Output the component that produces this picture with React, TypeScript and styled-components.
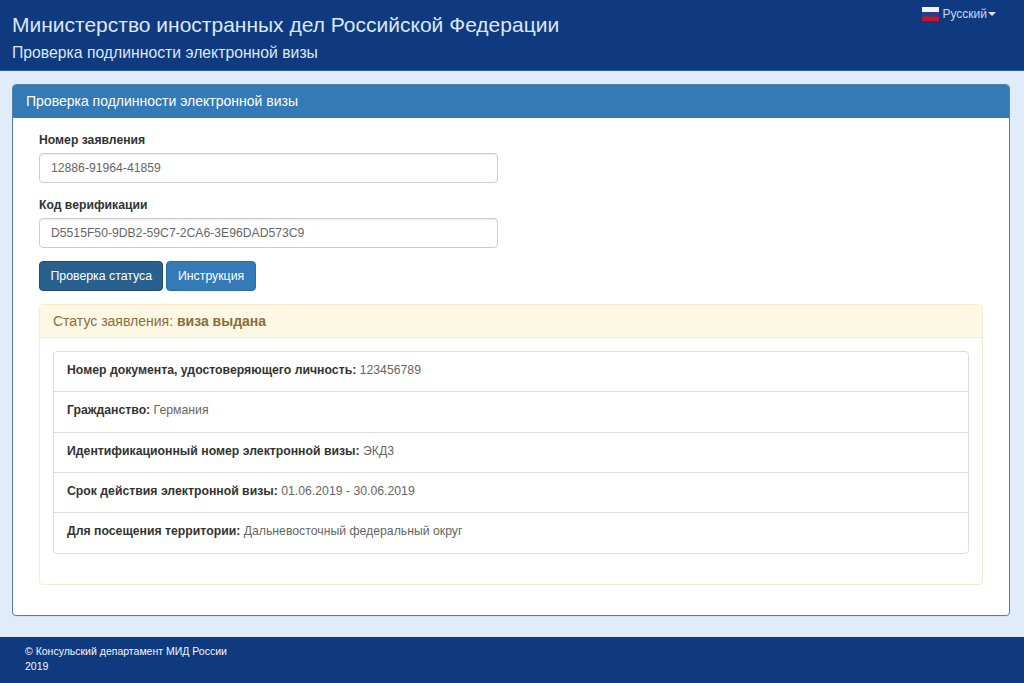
import React from "react";
import styled, { createGlobalStyle } from "styled-components";

const Global = createGlobalStyle`
  html, body { margin: 0; padding: 0; }
  body {
    background: #e0ecfa;
    font-family: "Liberation Sans", Arial, sans-serif;
    font-size: 12px;
    color: #333;
  }
  * { box-sizing: border-box; }
`;

const Page = styled.div`
  height: 683px;
  display: flex;
  flex-direction: column;
  overflow: hidden;
`;

const Header = styled.header`
  height: 71px;
  flex: none;
  background: #103a80;
  border-bottom: 1px solid #2c5a94;
  padding: 11px 12px 0;
  position: relative;
  color: #dbe7f7;
`;

const Title = styled.h1`
  margin: 0;
  font-size: 21px;
  line-height: 27px;
  font-weight: 400;
`;

const Subtitle = styled.h2`
  margin: 5px 0 0;
  font-size: 15.75px;
  line-height: 20px;
  font-weight: 400;
`;

const Lang = styled.div`
  position: absolute;
  top: 7px;
  right: 28px;
  display: flex;
  align-items: center;
  gap: 3px;
  font-size: 12px;
  line-height: 14px;
  color: #c6d8f2;
`;

const Caret = styled.span`
  width: 0;
  height: 0;
  border-left: 4px solid transparent;
  border-right: 4px solid transparent;
  border-top: 4px solid #d6e3f6;
  margin-left: -2px;
`;

const Main = styled.main`
  flex: 1;
  min-height: 0;
  padding: 13px 14px 21px 12px;
  display: flex;
`;

const Panel = styled.section`
  flex: 1;
  background: #fff;
  border: 1px solid #4f83ad;
  border-radius: 4px;
  box-shadow: 0 1px 1px rgba(0, 0, 0, 0.05);
  display: flex;
  flex-direction: column;
`;

const PanelHeading = styled.div`
  height: 33px;
  flex: none;
  background: #337ab7;
  color: #fff;
  font-size: 14px;
  line-height: 33px;
  padding: 0 13px;
  border-radius: 3px 3px 0 0;
`;

const PanelBody = styled.div`
  flex: 1;
  min-height: 0;
  padding: 14px 26px 30px;
  display: flex;
  flex-direction: column;
`;

const Field = styled.div`
  margin-bottom: 14px;
`;

const Label = styled.label`
  display: block;
  font-weight: 700;
  font-size: 12.2px;
  line-height: 16px;
  margin-bottom: 5px;
  color: #333;
`;

const Input = styled.input`
  display: block;
  width: 459px;
  height: 30px;
  padding: 0 11px;
  font: 12.2px "Liberation Sans", Arial, sans-serif;
  color: #666;
  background: #fff;
  border: 1px solid #ccc;
  border-radius: 4px;
  box-shadow: inset 0 1px 1px rgba(0, 0, 0, 0.075);
`;

const Buttons = styled.div`
  display: flex;
  gap: 3px;
  margin-top: -1px;
  margin-bottom: 13px;
`;

const Button = styled.button<{ $active?: boolean }>`
  height: 30px;
  padding: 0 ${(p) => (p.$active ? "10.5px" : "10.5px")};
  font: 12.3px "Liberation Sans", Arial, sans-serif;
  color: #fff;
  background: ${(p) => (p.$active ? "#286090" : "#337ab7")};
  border: 1px solid ${(p) => (p.$active ? "#204d74" : "#2e6da4")};
  border-radius: 4px;
`;

const Status = styled.div`
  flex: 1;
  min-height: 0;
  border: 1px solid #faebcc;
  border-radius: 4px;
  display: flex;
  flex-direction: column;
`;

const StatusHeading = styled.div`
  height: 33px;
  flex: none;
  background: #fcf8e3;
  border-bottom: 1px solid #faebcc;
  color: #8a6d3b;
  font-size: 14px;
  line-height: 32px;
  padding: 0 13px;
`;

const StatusBody = styled.div`
  padding: 13px 13px 0;
`;

const List = styled.ul`
  margin: 0;
  padding: 0;
  list-style: none;
  border: 1px solid #ddd;
  border-radius: 4px;
`;

const Item = styled.li`
  height: 40.2px;
  padding: 0 13px;
  font-size: 12.25px;
  line-height: 36px;
  color: #666;
  border-top: 1px solid #ddd;
  &:first-child { border-top: 0; height: 39.4px; }
  &:last-child { height: 41px; }
  b { color: #333; font-weight: 700; }
`;

const Footer = styled.footer`
  height: 46px;
  flex: none;
  background: #103a80;
  color: #f2f6fc;
  font-size: 10.5px;
  line-height: 15px;
  padding: 7px 25px 0;
`;

const rows: [string, string][] = [
  ["Номер документа, удостоверяющего личность:", "123456789"],
  ["Гражданство:", "Германия"],
  ["Идентификационный номер электронной визы:", "ЭКД3"],
  ["Срок действия электронной визы:", "01.06.2019 - 30.06.2019"],
  ["Для посещения территории:", "Дальневосточный федеральный округ"],
];

const Flag = () => (
  <svg width="17" height="14" viewBox="0 0 17 14" aria-hidden="true">
    <rect width="17" height="5" fill="#f4f4f6" />
    <rect y="5" width="17" height="4.5" fill="#2a3f8f" />
    <rect y="9.5" width="17" height="4.5" fill="#c5162e" />
  </svg>
);

export default function App() {
  return (
    <Page>
      <Global />
      <Header>
        <Title>Министерство иностранных дел Российской Федерации</Title>
        <Subtitle>Проверка подлинности электронной визы</Subtitle>
        <Lang>
          <Flag />
          Русский
          <Caret />
        </Lang>
      </Header>
      <Main>
        <Panel>
          <PanelHeading>Проверка подлинности электронной визы</PanelHeading>
          <PanelBody>
            <Field>
              <Label>Номер заявления</Label>
              <Input readOnly value="12886-91964-41859" />
            </Field>
            <Field>
              <Label>Код верификации</Label>
              <Input readOnly value="D5515F50-9DB2-59C7-2CA6-3E96DAD573C9" />
            </Field>
            <Buttons>
              <Button $active>Проверка статуса</Button>
              <Button>Инструкция</Button>
            </Buttons>
            <Status>
              <StatusHeading>
                Статус заявления: <b>виза выдана</b>
              </StatusHeading>
              <StatusBody>
                <List>
                  {rows.map(([k, v]) => (
                    <Item key={k}>
                      <b>{k}</b> {v}
                    </Item>
                  ))}
                </List>
              </StatusBody>
            </Status>
          </PanelBody>
        </Panel>
      </Main>
      <Footer>
        © Консульский департамент МИД России
        <br />
        2019
      </Footer>
    </Page>
  );
}
